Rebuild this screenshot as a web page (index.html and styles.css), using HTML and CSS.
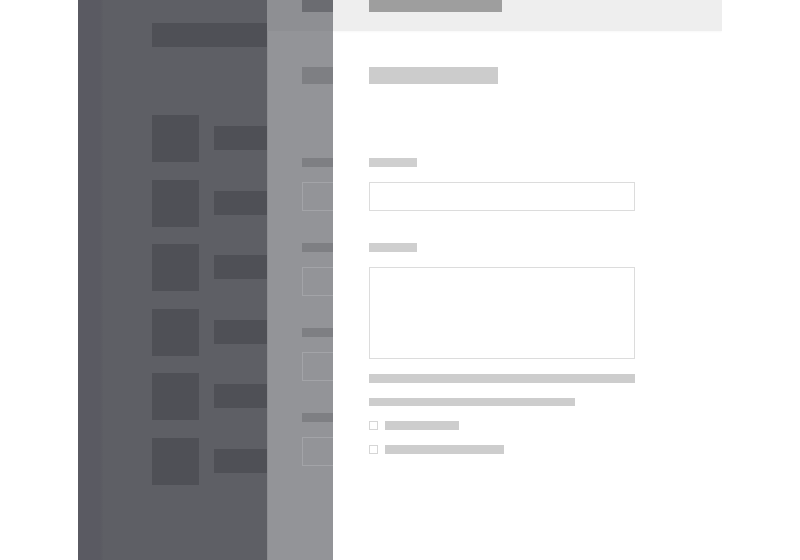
FILE: index.html
```html
<!DOCTYPE html>
<html lang="en">
<head>
<meta charset="utf-8">
<title>Layered panels</title>
<link rel="stylesheet" href="styles.css">
</head>
<body>
<div class="stage">
  <aside class="sidebar">
    <div class="strip"></div>
    <div class="side-content">
      <div class="side-title"></div>
      <ul class="side-list">
        <li class="side-item"><span class="thumb"></span><span class="line"></span></li>
        <li class="side-item"><span class="thumb"></span><span class="line"></span></li>
        <li class="side-item"><span class="thumb"></span><span class="line"></span></li>
        <li class="side-item"><span class="thumb"></span><span class="line"></span></li>
        <li class="side-item"><span class="thumb"></span><span class="line"></span></li>
        <li class="side-item"><span class="thumb"></span><span class="line"></span></li>
      </ul>
    </div>
  </aside>
  <section class="mid">
    <div class="mid-head"><span class="mid-head-block"></span></div>
    <div class="mid-body">
      <div class="mid-title"></div>
      <div class="mid-fields">
        <div class="mid-field"><span class="mid-label"></span><span class="mid-input"></span></div>
        <div class="mid-field"><span class="mid-label"></span><span class="mid-input"></span></div>
        <div class="mid-field"><span class="mid-label"></span><span class="mid-input"></span></div>
        <div class="mid-field"><span class="mid-label"></span><span class="mid-input"></span></div>
      </div>
    </div>
  </section>
  <main class="panel">
    <div class="panel-head"><span class="head-block"></span></div>
    <div class="panel-body">
      <div class="title"></div>
      <div class="label label-first"></div>
      <div class="input"></div>
      <div class="label label-second"></div>
      <div class="textarea"></div>
      <div class="bar bar-full"></div>
      <div class="bar bar-mid"></div>
      <div class="check-row"><span class="box"></span><span class="check-text short"></span></div>
      <div class="check-row"><span class="box"></span><span class="check-text long"></span></div>
    </div>
  </main>
</div>
</body>
</html>
```

FILE: styles.css
```css
* { box-sizing: border-box; }
html, body { margin: 0; padding: 0; background: #ffffff; }
body { font-family: "Liberation Sans", Arial, sans-serif; }

.stage {
  width: 644px;
  height: 560px;
  margin-left: 78px;
  display: flex;
  overflow: hidden;
}

/* Left dark sidebar */
.sidebar {
  width: 189px;
  flex: none;
  display: flex;
  background: #5e5f65;
  overflow: hidden;
}
.strip {
  width: 25px;
  flex: none;
  background: linear-gradient(to right, #5a5a62 0, #5a5a62 22px, #5d5e64 25px);
}
.side-content {
  flex: none;
  width: 164px;
  padding: 23px 0 0 49px;
}
.side-title {
  width: 130px;
  height: 24px;
  background: #4f5056;
}
.side-list {
  list-style: none;
  margin: 68px 0 0;
  padding: 0;
  display: flex;
  flex-direction: column;
  gap: 17.6px;
}
.side-item {
  display: flex;
  align-items: flex-start;
  gap: 15px;
  height: 47px;
}
.thumb {
  width: 47px;
  height: 47px;
  flex: none;
  background: #4f5056;
}
.line {
  margin-top: 11px;
  width: 80px;
  height: 24px;
  flex: none;
  background: #4f5056;
}

/* Middle dimmed panel */
.mid {
  width: 66px;
  flex: none;
  background: #939498;
  overflow: hidden;
  box-shadow: inset 1px 0 0 #8b8c90;
}
.mid-head {
  height: 31px;
  background: #8e8f93;
  padding-left: 35px;
}
.mid-head-block {
  display: block;
  width: 60px;
  height: 12px;
  background: #6b6c71;
}
.mid-body {
  padding-left: 35px;
}
.mid-title {
  margin-top: 36px;
  width: 60px;
  height: 17px;
  background: #7e7f83;
}
.mid-fields {
  margin-top: 74px;
  display: flex;
  flex-direction: column;
  gap: 32px;
}
.mid-field {
  display: flex;
  flex-direction: column;
}
.mid-label {
  display: block;
  width: 60px;
  height: 9px;
  background: #7e7f83;
}
.mid-input {
  display: block;
  margin-top: 15px;
  width: 80px;
  height: 29px;
  border: 1.5px solid #a3a4a8;
  background: #939498;
}

/* Main white panel */
.panel {
  width: 389px;
  flex: none;
  background: #ffffff;
}
.panel-head {
  height: 31px;
  background: #eeeeee;
  padding-left: 36px;
  box-shadow: 0 1px 2px rgba(0,0,0,0.03);
}
.head-block {
  display: block;
  width: 133px;
  height: 12px;
  background: #9e9e9e;
}
.panel-body {
  padding-left: 36px;
  display: flex;
  flex-direction: column;
  align-items: flex-start;
}
.title {
  margin-top: 36px;
  width: 129px;
  height: 17px;
  background: #cccccc;
}
.label {
  width: 48px;
  height: 9px;
  background: #cfcfcf;
}
.label-first { margin-top: 74px; }
.label-second { margin-top: 32px; }
.input {
  margin-top: 15px;
  width: 266px;
  height: 29px;
  border: 1.5px solid #dcdcdc;
}
.textarea {
  margin-top: 15px;
  width: 266px;
  height: 92px;
  border: 1.5px solid #dcdcdc;
}
.bar {
  height: 9px;
  background: #cdcdcd;
  margin-top: 15px;
}
.bar-full { width: 266px; }
.bar-mid { width: 206px; height: 8px; }
.check-row {
  margin-top: 15px;
  display: flex;
  align-items: center;
  gap: 7px;
  height: 9px;
}
.box {
  width: 9px;
  height: 9px;
  border: 1.5px solid #d6d6d6;
  background: #ffffff;
}
.check-text {
  height: 9px;
  background: #cdcdcd;
}
.check-text.short { width: 74px; }
.check-text.long { width: 119px; }
```
